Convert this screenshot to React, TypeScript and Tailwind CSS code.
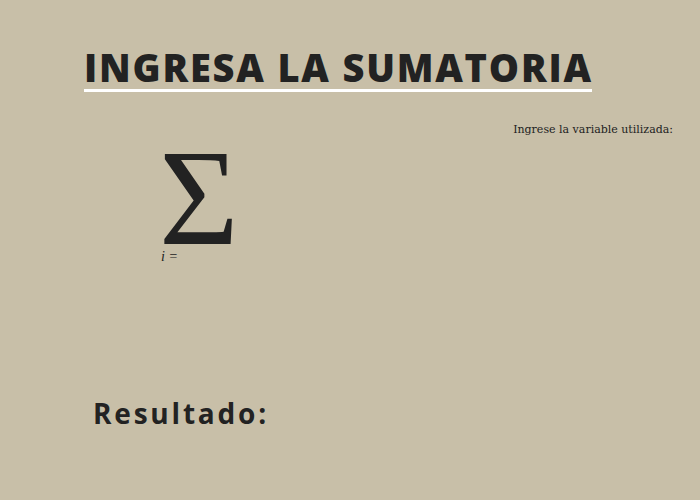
import React from "react";

export default function App() {
  return (
    <div className="w-[700px] h-[500px] bg-[#c8bfa8] text-[#222222] flex flex-col overflow-hidden">
      <div className="pt-[45px] pl-[84px] flex">
        <div className="flex flex-col">
          <h1
            className="text-[38px] leading-[44px] font-extrabold tracking-[1.8px] whitespace-nowrap"
            style={{ fontFamily: '"Open Sans", sans-serif' }}
          >
            INGRESA LA SUMATORIA
          </h1>
          <div className="h-[3px] bg-white w-[508px]" />
        </div>
      </div>
      <div className="flex justify-between">
        <div className="pl-[159px] pt-[58px] flex flex-col" style={{ fontFamily: '"Liberation Serif", serif' }}>
          <div className="text-[137px] leading-[96px]">Σ</div>
          <div className="text-[14px] italic pl-[2px] mt-[3px] leading-[16px]">i =</div>
        </div>
        <div
          className="pr-[27px] pt-[30px] text-[11px]"
          style={{ fontFamily: '"DejaVu Serif", serif' }}
        >
          Ingrese la variable utilizada:
        </div>
      </div>
      <div
        className="pl-[93px] mt-[127px] text-[28px] font-bold tracking-[2.8px]"
        style={{ fontFamily: '"Open Sans", sans-serif' }}
      >
        Resultado:
      </div>
    </div>
  );
}
